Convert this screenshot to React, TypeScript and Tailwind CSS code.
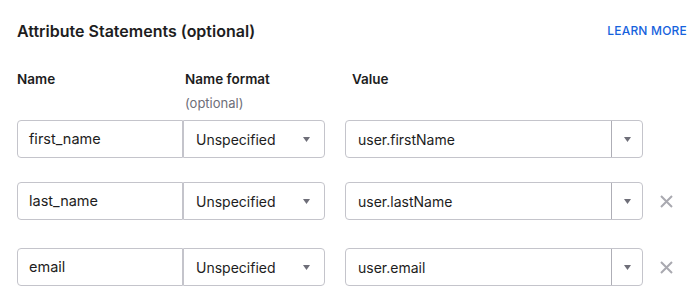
import React from "react";

const font = { fontFamily: "Inter, 'Liberation Sans', sans-serif" };

function Caret() {
  return (
    <svg width="7" height="5" viewBox="0 0 7 5" className="block">
      <path d="M0 0 L7 0 L3.5 5 Z" fill="#6e6e78" />
    </svg>
  );
}

function XIcon() {
  return (
    <svg width="13" height="13" viewBox="0 0 13 13" className="block">
      <path d="M1 1 L12 12 M12 1 L1 12" stroke="#a9a9b0" strokeWidth="2" strokeLinecap="butt" />
    </svg>
  );
}

function Row({ name, value, removable, mt }: { name: string; value: string; removable: boolean; mt: string }) {
  return (
    <div className={`flex items-center ${mt}`}>
      <div className="w-[166px] h-[38px] border border-[#c4c4cb] rounded-l-[4px] flex items-center pl-[11px] text-[14.5px] text-[#1d1d21]">
        {name}
      </div>
      <div className="w-[142px] h-[38px] border border-[#c4c4cb] rounded-r-[4px] flex items-center justify-between pl-[12px] pr-[14px] text-[14px] text-[#1d1d21]">
        <span>Unspecified</span>
        <Caret />
      </div>
      <div className="ml-[20px] w-[298px] h-[38px] border border-[#c4c4cb] rounded-[4px] flex items-center text-[14px] text-[#1d1d21]">
        <div className="flex-1 pl-[12px]">{value}</div>
        <div className="w-[31px] h-full border-l border-[#aeaeb6] flex items-center justify-center">
          <Caret />
        </div>
      </div>
      {removable && (
        <div className="ml-[17px]">
          <XIcon />
        </div>
      )}
    </div>
  );
}

export default function App() {
  return (
    <div className="w-[697px] h-[295px] bg-white overflow-hidden pl-[17px]" style={font}>
      <div className="flex items-start justify-between pt-[21px] pr-[10px]">
        <div className="text-[16px] leading-[21px] font-semibold text-[#1d1d21]">Attribute Statements (optional)</div>
        <div className="text-[12px] leading-[14px] pt-[3px] font-medium text-[#1662dd] tracking-[0.2px]">LEARN MORE</div>
      </div>
      <div className="flex mt-[29px] text-[13.5px] leading-[16px]">
        <div className="w-[168px] font-semibold text-[#1d1d21]">Name</div>
        <div className="w-[167px] flex flex-col">
          <span className="font-semibold text-[#1d1d21]">Name format</span>
          <span className="mt-[8px] text-[13px] text-[#6e6e78]">(optional)</span>
        </div>
        <div className="font-semibold text-[#1d1d21]">Value</div>
      </div>
      <Row name="first_name" value="user.firstName" removable={false} mt="mt-[9px]" />
      <Row name="last_name" value="user.lastName" removable={true} mt="mt-[24px]" />
      <Row name="email" value="user.email" removable={true} mt="mt-[28px]" />
    </div>
  );
}
